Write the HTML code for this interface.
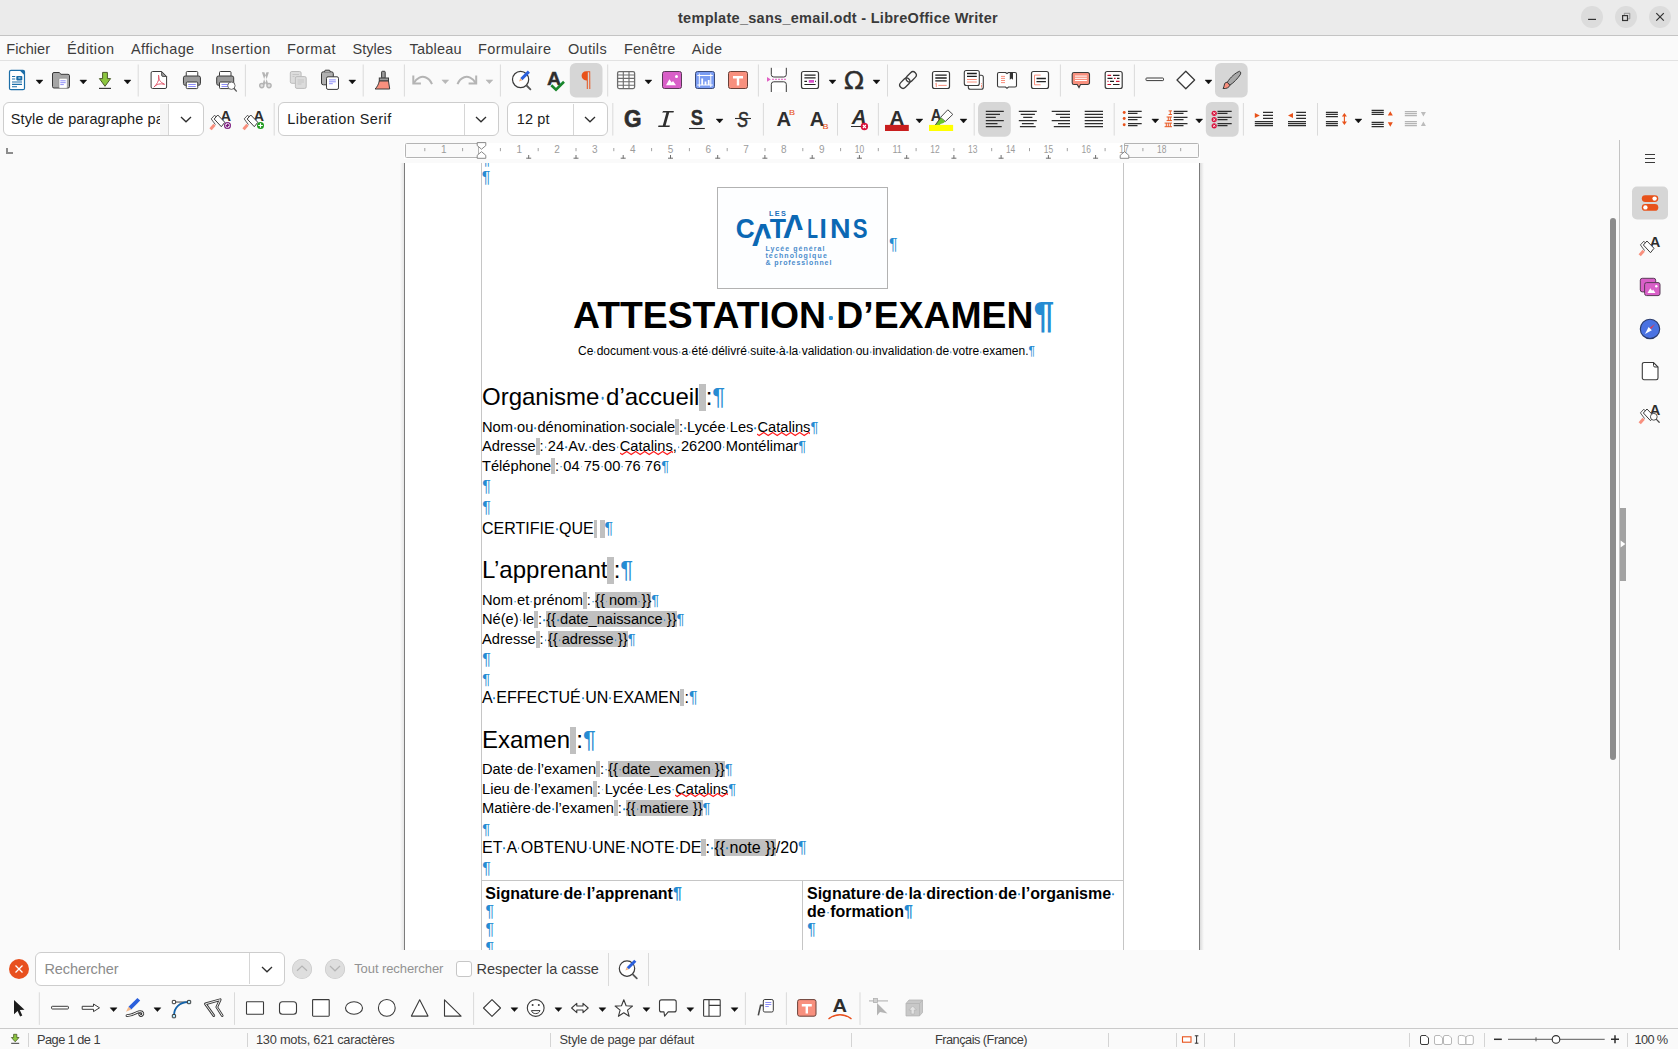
<!DOCTYPE html><html><head><meta charset="utf-8"><title>template_sans_email.odt - LibreOffice Writer</title><style>html,body{margin:0;padding:0}body{width:1678px;height:1049px;overflow:hidden;position:relative;background:#fafafa;font-family:'Liberation Sans',sans-serif}.d{position:absolute;white-space:pre;color:#000;font-family:'Liberation Sans',sans-serif;font-kerning:normal}
.s{position:relative}
.s::after{content:"";position:absolute;left:50%;top:57%;width:.11em;height:.11em;min-width:1.4px;min-height:1.4px;transform:translate(-50%,-50%);background:#268bd2;border-radius:30%}
.n{display:inline-block;width:.26em;background:#c0c0c0;line-height:1.12em}
.n::before{content:"\200b"}
.f{background:#c0c0c0}
.p{color:#268bd2}
.w{position:relative;display:inline-block;overflow:visible}
.wv{position:absolute;left:0;top:.94em;width:100%;height:5px;overflow:hidden}
</style></head><body>
<div style="position:absolute;left:0px;top:0px;width:1678px;height:35px;background:#ebebeb"></div>
<div style="position:absolute;left:0px;top:35px;width:1678px;height:1px;background:#c4c4c4"></div>
<div style="position:absolute;left:0px;top:60px;width:1678px;height:1px;background:#e2e2e2"></div>
<span style="position:absolute;left:678px;top:10.28px;white-space:pre;font:bold 14.5px/17px 'Liberation Sans',sans-serif;color:#3a3a3a;letter-spacing:0.283px;">template_sans_email.odt - LibreOffice Writer</span>
<div style="position:absolute;left:1581px;top:6px;width:22px;height:22px;border-radius:11px;background:#dcdcdc"></div>
<div style="position:absolute;left:1615px;top:6px;width:22px;height:22px;border-radius:11px;background:#dcdcdc"></div>
<div style="position:absolute;left:1649px;top:6px;width:22px;height:22px;border-radius:11px;background:#dcdcdc"></div>
<svg style="position:absolute;left:1580px;top:5px" width="92" height="24" viewBox="1580 5 92 24"><path d="M1588.100 19.400H1596" stroke="#333" stroke-width="1.200" fill="none"/><path d="M1624.300 14.900V13.300H1629.800V18.800H1628.200" stroke="#8a8a8a" stroke-width=".9" fill="none"/><rect x="1622.600" y="15.600" width="4.900" height="4.900" stroke="#333" stroke-width="1.200" fill="none"/><path d="M1656.300 13.100L1663.800 20.700M1663.800 13.100L1656.300 20.700" stroke="#333" stroke-width="1.200" fill="none"/></svg>
<span style="position:absolute;left:6.3px;top:40.98px;white-space:pre;font:normal 14.5px/17px 'Liberation Sans',sans-serif;color:#3d3d3d;letter-spacing:0.026px;">Fichier</span>
<span style="position:absolute;left:67px;top:40.98px;white-space:pre;font:normal 14.5px/17px 'Liberation Sans',sans-serif;color:#3d3d3d;letter-spacing:0.451px;">Édition</span>
<span style="position:absolute;left:131px;top:40.98px;white-space:pre;font:normal 14.5px/17px 'Liberation Sans',sans-serif;color:#3d3d3d;letter-spacing:0.366px;">Affichage</span>
<span style="position:absolute;left:211px;top:40.98px;white-space:pre;font:normal 14.5px/17px 'Liberation Sans',sans-serif;color:#3d3d3d;letter-spacing:0.453px;">Insertion</span>
<span style="position:absolute;left:287px;top:40.98px;white-space:pre;font:normal 14.5px/17px 'Liberation Sans',sans-serif;color:#3d3d3d;letter-spacing:0.513px;">Format</span>
<span style="position:absolute;left:352.5px;top:40.98px;white-space:pre;font:normal 14.5px/17px 'Liberation Sans',sans-serif;color:#3d3d3d;letter-spacing:0.000px;">Styles</span>
<span style="position:absolute;left:409.5px;top:40.98px;white-space:pre;font:normal 14.5px/17px 'Liberation Sans',sans-serif;color:#3d3d3d;letter-spacing:0.200px;">Tableau</span>
<span style="position:absolute;left:478px;top:40.98px;white-space:pre;font:normal 14.5px/17px 'Liberation Sans',sans-serif;color:#3d3d3d;letter-spacing:0.420px;">Formulaire</span>
<span style="position:absolute;left:568px;top:40.98px;white-space:pre;font:normal 14.5px/17px 'Liberation Sans',sans-serif;color:#3d3d3d;letter-spacing:0.320px;">Outils</span>
<span style="position:absolute;left:624px;top:40.98px;white-space:pre;font:normal 14.5px/17px 'Liberation Sans',sans-serif;color:#3d3d3d;letter-spacing:0.217px;">Fenêtre</span>
<span style="position:absolute;left:691.7px;top:40.98px;white-space:pre;font:normal 14.5px/17px 'Liberation Sans',sans-serif;color:#3d3d3d;letter-spacing:0.442px;">Aide</span>
<svg style="position:absolute;left:0;top:60px" width="1678" height="40" viewBox="0 60 1678 40"><path d="M11 70.3H23A1.5 1.5 0 0 1 24.5 71.8V88.2A1.5 1.5 0 0 1 23 89.7H11A1.5 1.5 0 0 1 9.5 88.2V71.8A1.5 1.5 0 0 1 11 70.3Z" fill="#fff" stroke="#1c6ea8" stroke-width="1.2"/><path d="M19.5 70.3H23A1.5 1.5 0 0 1 24.5 71.8V75.3Z" fill="#1c6ea8"/><rect x="16.3" y="76" width="6" height="4.4" rx=".8" fill="#1c6ea8"/><rect x="18.3" y="77.3" width="2.2" height="1.3" fill="#bcd7ea"/><path d="M12 76.5h3.2M12 79h3.2M12 82h10M12 84.4h10M12 86.8h5" stroke="#1c6ea8" stroke-width="1.1"/><path d="M36.10 80.10H42.90L39.5 83.90Z" fill="#111" stroke="#111" stroke-width=".5" stroke-linejoin="round"/><path d="M54 72.5h5.2l1.8 1.8h7a1.5 1.5 0 0 1 1.5 1.5V86.5a1.5 1.5 0 0 1-1.5 1.5H54a1.5 1.5 0 0 1-1.5-1.5V74a1.5 1.5 0 0 1 1.5-1.5Z" fill="#a6a6a6" stroke="#3a3a3a"/><rect x="59" y="78.3" width="8.3" height="10" rx="1" fill="#fff" stroke="#8a8a8a" stroke-width=".6"/><path d="M60.3 80.8h5.4M60.3 82.7h5.4M60.3 84.6h3.5" stroke="#8e8ef8" stroke-width="1"/><path d="M79.90 80.10H86.70L83.3 83.90Z" fill="#111" stroke="#111" stroke-width=".5" stroke-linejoin="round"/><path d="M102.6 72.4h4.8v6.2h3.2L105 86.3l-5.6-7.7h3.2Z" fill="#8cc63f" stroke="#4a5a2a" stroke-width="1" stroke-linejoin="round"/><path d="M99 88.4h12" stroke="#3a3a3a" stroke-width="1.2"/><path d="M124.10 80.10H130.90L127.5 83.90Z" fill="#111" stroke="#111" stroke-width=".5" stroke-linejoin="round"/><path d="M138.2 64.5V96.5" stroke="#dadada" stroke-width="1" fill="none"/><path d="M152.6 71.5h9l5 5v10.5a1.5 1.5 0 0 1-1.5 1.5h-12.5a1.5 1.5 0 0 1-1.5-1.5V73a1.5 1.5 0 0 1 1.5-1.5Z" fill="#fff" stroke="#3a3a3a"/><path d="M161.6 71.5v3.5a1.5 1.5 0 0 0 1.5 1.5h3.5Z" fill="#9a9a9a" stroke="#3a3a3a" stroke-width=".8" stroke-linejoin="round"/><path d="M158.6 75.6c1.2 2.5-.6 8-4.4 11.2M158.6 75.6c-.8 3 1.6 7 5.6 8.400M154.200 86.800c2-2.600 6.500-3.800 10-2.400" stroke="#e2566a" stroke-width="1" fill="none" stroke-linecap="round"/><rect x="186.25" y="71.5" width="11.5" height="5" rx="1" fill="#fff" stroke="#3a3a3a"/><rect x="183.45" y="76" width="17" height="9.3" rx="1.8" fill="#9c9c9c" stroke="#3a3a3a"/><rect x="186.25" y="82" width="11.5" height="6.6" rx="1" fill="#fff" stroke="#3a3a3a"/><path d="M188.25 84.5h7.5M188.25 86.5h7.5" stroke="#8e8ef8" stroke-width="1"/><rect x="219.5" y="71.5" width="11.5" height="5" rx="1" fill="#fff" stroke="#3a3a3a"/><rect x="216.7" y="76" width="17" height="9.3" rx="1.8" fill="#9c9c9c" stroke="#3a3a3a"/><rect x="219.5" y="82" width="11.5" height="6.6" rx="1" fill="#fff" stroke="#3a3a3a"/><path d="M221.5 84.5h7.5M221.5 86.5h7.5" stroke="#8e8ef8" stroke-width="1"/><circle cx="231.400" cy="85.700" r="3.700" fill="#fff" stroke="#5a5a5a" stroke-width=".9"/><path d="M234.100 88.500L236.400 91.100" stroke="#5a5a5a" stroke-width="1.400" stroke-linecap="round"/><path d="M245.4 64.5V96.5" stroke="#dadada" stroke-width="1" fill="none"/><path d="M261.900 72.200h2.500l3.700 11.200l-2.100 1.300ZM268.900 72.200h-2.500l-3.700 11.200l2.100 1.300Z" fill="#b4b4b4"/><circle cx="261.800" cy="85.600" r="2.100" fill="#e0e0e0" stroke="#b4b4b4" stroke-width="1.400"/><circle cx="269" cy="85.600" r="2.100" fill="#e0e0e0" stroke="#b4b4b4" stroke-width="1.400"/><rect x="290.300" y="71.500" width="10.800" height="11.800" rx="1.500" fill="#dcdcdc" stroke="#bcbcbc"/><rect x="295.400" y="76.600" width="10.800" height="11.800" rx="1.500" fill="#dcdcdc" stroke="#bcbcbc"/><path d="M292.500 74.500h6.500M292.500 76.500h2M297.500 80h6.500M297.500 82h6.500M297.500 84h4" stroke="#c6c6c6" stroke-width="1"/><rect x="321.500" y="71.800" width="11.800" height="13" rx="1.800" fill="#b0b0b0" stroke="#3a3a3a"/><path d="M324.700 72v-.8a1 1 0 0 1 1-1h3.400a1 1 0 0 1 1 1v.8" fill="#b0b0b0" stroke="#3a3a3a"/><rect x="326.500" y="76.800" width="12" height="12.600" rx="1.500" fill="#fff" stroke="#3a3a3a"/><path d="M329 79.900h6.800M329 81.800h6.800M329 83.700h3.800" stroke="#8e8ef8" stroke-width="1"/><path d="M348.90 80.10H355.70L352.3 83.90Z" fill="#111" stroke="#111" stroke-width=".5" stroke-linejoin="round"/><path d="M363.2 64.5V96.5" stroke="#dadada" stroke-width="1" fill="none"/><rect x="381.600" y="71.300" width="3.600" height="7" rx=".8" fill="#9c9c9c" stroke="#3a3a3a"/><rect x="379.300" y="78" width="9.200" height="3" fill="#9c9c9c" stroke="#3a3a3a"/><path d="M379.300 81h9.200c.4 2.700.8 5.300 1.200 8h-14.600c2.300-2.400 3.600-5 4.200-8Z" fill="#f8907e" stroke="#3a3a3a" stroke-linejoin="round"/><path d="M404.4 64.5V96.5" stroke="#dadada" stroke-width="1" fill="none"/><path d="M413.300 75.500v8h7.600" stroke="#b4b4b4" stroke-width="2" fill="none"/><path d="M413.800 83c3-5.500 8-7 11.500-5.800c3.200 1.100 5.400 3.600 6.700 7" stroke="#b4b4b4" stroke-width="2" fill="none"/><path d="M441.90 79.90H448.70L445.3 83.70Z" fill="#b8b8b8" stroke="#b8b8b8" stroke-width=".5" stroke-linejoin="round"/><path d="M476.200 75.500v8h-7.600" stroke="#b4b4b4" stroke-width="2" fill="none"/><path d="M475.700 83c-3-5.500-8-7-11.500-5.800c-3.200 1.100-5.400 3.600-6.700 7" stroke="#b4b4b4" stroke-width="2" fill="none"/><path d="M486.00 79.90H492.80L489.4 83.70Z" fill="#b8b8b8" stroke="#b8b8b8" stroke-width=".5" stroke-linejoin="round"/><path d="M500.4 64.5V96.5" stroke="#dadada" stroke-width="1" fill="none"/><circle cx="520.6" cy="79.5" r="8.1" fill="#fff" stroke="#3a3a3a" stroke-width="1.2"/><path d="M526.6 85.5L530.4 89.3" stroke="#555" stroke-width="1.8" stroke-linecap="round"/><path d="M521.4 79.1L528.9 71.6" stroke="#2a5fdc" stroke-width="3"/><path d="M519.0 81.5l1.300-3.300l2 2Z" fill="#f0b080"/><text transform="translate(547.01 84.50) scale(0.1953 0.1904)" font-family="Liberation Sans,sans-serif" font-size="100" font-weight="bold" font-style="normal" fill="#2e2e2e" stroke="#2e2e2e" stroke-width="2">A</text><path d="M551.300 85.200L556 89.600L564 81.700" stroke="#18852a" stroke-width="2.600" fill="none"/><rect x="569.800" y="63" width="32.700" height="34.600" rx="6" fill="#d6d6d6"/><path d="M590.200 71.200H586.200a4.600 4.600 0 0 0 0 9.200h.6V89h1V72.200h1.500V89h1Z" fill="#e8521a"/><path d="M607.7 64.5V96.5" stroke="#dadada" stroke-width="1" fill="none"/><rect x="617.600" y="71.600" width="17" height="17" rx="1.500" fill="#fff" stroke="#6c6c6c" stroke-width="1.300"/><path d="M623.300 71.600v17M629 71.600v17M617.600 75h17M617.600 78.400h17M617.600 81.800h17M617.600 85.200h17" stroke="#6c6c6c" stroke-width="1.100"/><path d="M645.00 80.10H651.80L648.4 83.90Z" fill="#111" stroke="#111" stroke-width=".5" stroke-linejoin="round"/><rect x="662.500" y="71.500" width="19" height="17" rx="2" fill="#d95fc8" stroke="#5a3a58"/><path d="M666 85.200l3.400-6l2.300 3.400l1.300-1.500l3 4.100Z" fill="#fff"/><circle cx="676.500" cy="76.400" r="1.500" fill="#fff"/><rect x="695.500" y="71.500" width="19" height="17" rx="2" fill="#7a9cf2" stroke="#3a4a78"/><path d="M699.300 73.500v13.500M710.800 73.500v13.500M697.300 75.500h15.500M697.300 85h15.500" stroke="#fff" stroke-width="1"/><path d="M701.300 85v-6.500h1.800V85M704.600 85v-3.500h1.800V85M707.800 85v-5h1.800V85" fill="#fff"/><rect x="728.500" y="71.500" width="19" height="17" rx="2" fill="#f8907e" stroke="#6a4038"/><path d="M733 76h10v2.400h-3.800v7.200h-2.400v-7.200H733Z" fill="#fff"/><path d="M758.4 64.5V96.5" stroke="#dadada" stroke-width="1" fill="none"/><path d="M771.300 67.800v6.700a2.500 2.500 0 0 0 2.500 2.500h10a2.500 2.500 0 0 0 2.500-2.500v-6.700M771.300 92v-7.700a2.500 2.500 0 0 1 2.500-2.500h10a2.500 2.500 0 0 1 2.500 2.500V92" fill="#fff" stroke="#3a3a3a" stroke-width="1"/><path d="M772 79.300h14.500" stroke="#e25fc4" stroke-width="1" stroke-dasharray="2 1"/><path d="M767 77v4.800l3.800-2.400Z" fill="#e25fc4"/><rect x="801.500" y="71.500" width="17" height="17" rx="2" fill="#fff" stroke="#3a3a3a" stroke-width="1.200"/><path d="M804.400 75.100h11.200M804.400 77.900h11.200M804.400 81.400h2.600M815 81.400h.8M804.400 84.500h11.200" stroke="#222" stroke-width="1.100"/><rect x="808.800" y="80" width="5.200" height="2.700" fill="#d650c8"/><path d="M829.10 80.10H835.90L832.5 83.90Z" fill="#111" stroke="#111" stroke-width=".5" stroke-linejoin="round"/><text transform="translate(844.10 88.70) scale(0.2616 0.2399)" font-family="DejaVu Sans,sans-serif" font-size="100" font-weight="normal" font-style="normal" fill="#2e2e2e" stroke="#2e2e2e" stroke-width="1.5">Ω</text><path d="M873.10 80.10H879.90L876.5 83.90Z" fill="#111" stroke="#111" stroke-width=".5" stroke-linejoin="round"/><path d="M887.5 64.5V96.5" stroke="#dadada" stroke-width="1" fill="none"/><g transform="rotate(-45 908 80)" fill="none" stroke="#3a3a3a" stroke-width="1.300"><rect x="897.700" y="76.700" width="11.600" height="6.600" rx="3.300"/><rect x="906.700" y="76.700" width="11.600" height="6.600" rx="3.300"/></g><rect x="932.500" y="71.500" width="17" height="17" rx="2" fill="#fff" stroke="#3a3a3a" stroke-width="1.200"/><path d="M935.300 75.200h11.400M935.300 78h11.400M935.300 80.800h11.400" stroke="#1c1c1c" stroke-width="1.300"/><path d="M935.300 84l1-.800v4M938.300 85.400h8.400" stroke="#f8907e" stroke-width="1" fill="none"/><rect x="968.300" y="75.300" width="15" height="14" rx="2" fill="#fff" stroke="#3a3a3a" stroke-width="1.100"/><rect x="964.300" y="70.500" width="15" height="15" rx="2" fill="#fff" stroke="#3a3a3a" stroke-width="1.100"/><path d="M967 73.500h9.800M967 76.400h9.800" stroke="#1c1c1c" stroke-width="1.300"/><path d="M967 79.500h9.800M967 82h9.800M981.500 83v.8M981.500 84.800v2.700" stroke="#f8907e" stroke-width="1"/><path d="M999 72.500h6.500l1.500 1l1.500-1h6.500a1.500 1.500 0 0 1 1.500 1.500v11.500a1.500 1.500 0 0 1-1.500 1.500h-6.500l-1.500 1.300l-1.500-1.300H999a1.500 1.500 0 0 1-1.500-1.500V74a1.500 1.500 0 0 1 1.500-1.500Z" fill="#fff" stroke="#3a3a3a" stroke-width="1.100"/><path d="M1001 76.400h4M1001 78.400h4M1001 80.500h4M1001 82.600h4" stroke="#f8907e" stroke-width="1"/><path d="M1009.800 72.500h3.200v7.200l-1.600-1.200l-1.600 1.200Z" fill="#333"/><rect x="1031.500" y="71.500" width="17" height="17" rx="2" fill="#fff" stroke="#3a3a3a" stroke-width="1.200"/><path d="M1040.600 75.100h-6.100v9.700h6.100" stroke="#f8907e" stroke-width="1" fill="none"/><path d="M1036.500 78.500h9.400M1036.500 81.600h9.400" stroke="#222" stroke-width="1.300"/><path d="M1060.4 64.5V96.5" stroke="#dadada" stroke-width="1" fill="none"/><path d="M1074 72.500h13.700a1.800 1.800 0 0 1 1.800 1.800v8.400a1.800 1.800 0 0 1-1.800 1.800h-7.200l-1.500 3l-1.800-3H1074a1.800 1.800 0 0 1-1.800-1.800v-8.400a1.800 1.800 0 0 1 1.800-1.800Z" fill="#f8907e" stroke="#3a3a3a" stroke-width="1.100"/><path d="M1075 76.100h11.900M1075 78.300h11.900M1075 80.500h11.900" stroke="#fff" stroke-width="1"/><rect x="1105.200" y="71.500" width="17" height="17" rx="2" fill="#fff" stroke="#3a3a3a" stroke-width="1.200"/><path d="M1113 75.300h6.500M1107.500 78.300h5M1117 78.300h2.500M1110 81.400h4M1113 84.500h6.500" stroke="#222" stroke-width="1.200"/><path d="M1107.500 75.300h3.600M1114 78.300h1.600M1107.500 81.400h1M1116 81.400h3.500M1107.500 84.500h3.600" stroke="#cc1030" stroke-width="1.200"/><path d="M1134.4 64.5V96.5" stroke="#dadada" stroke-width="1" fill="none"/><rect x="1146" y="78" width="17.500" height="2.600" rx=".7" fill="#fff" stroke="#3a3a3a" stroke-width="1"/><path d="M1185.800 71.200l8.800 8.800l-8.800 8.800l-8.800-8.800Z" fill="#fff" stroke="#3a3a3a" stroke-width="1.300" stroke-linejoin="round"/><path d="M1205.10 80.10H1211.90L1208.5 83.90Z" fill="#111" stroke="#111" stroke-width=".5" stroke-linejoin="round"/><rect x="1215" y="63" width="32.700" height="34.600" rx="6" fill="#d6d6d6"/><path d="M1227.300 82.300C1230 77.500 1236 72.300 1239.600 71.300c1.500.6 1.300 2.500.5 3.600c-2.300 3.400-6.500 8-10.300 10.300Z" fill="#a8a8a8" stroke="#3a3a3a" stroke-width="1"/><path d="M1227.300 82.300c-2-.2-2.800 1.200-3 2.700c-.2 1.400-.6 2.600-1.300 3.500c3 .4 6.300-.8 6.800-3.300Z" fill="#f8907e" stroke="#3a3a3a" stroke-width="1"/></svg>
<div style="position:absolute;left:2.5px;top:102.4px;width:199.0px;height:31.2px;border:1px solid #cdcdcd;border-radius:6px;background:#fff"></div>
<div style="position:absolute;left:168px;top:103.5px;width:1px;height:31px;background:#d6d6d6"></div>
<svg style="position:absolute;left:179.8px;top:115.9px;" width="12" height="7" viewBox="0 0 12 7"><path d="M1 1L6 5.800L11 1" stroke="#2e2e2e" stroke-width="1.300" fill="none"/></svg>
<div style="position:absolute;left:160px;top:103.5px;width:8px;height:31px;background:#f6f6f6"></div>
<div style="position:absolute;left:10.8px;top:104px;width:149.5px;height:30px;overflow:hidden">
<span style="position:absolute;left:0px;top:6.78px;white-space:pre;font:normal 14.5px/17px 'Liberation Sans',sans-serif;color:#1c1c1c;letter-spacing:0.103px;">Style de paragraphe par défaut</span>
</div>
<div style="position:absolute;left:278.3px;top:102.4px;width:218.7px;height:31.2px;border:1px solid #cdcdcd;border-radius:6px;background:#fff"></div>
<div style="position:absolute;left:463.6px;top:103.5px;width:1px;height:31px;background:#d6d6d6"></div>
<svg style="position:absolute;left:474.7px;top:115.9px;" width="12" height="7" viewBox="0 0 12 7"><path d="M1 1L6 5.800L11 1" stroke="#2e2e2e" stroke-width="1.300" fill="none"/></svg>
<span style="position:absolute;left:287.3px;top:110.98px;white-space:pre;font:normal 14.5px/17px 'Liberation Sans',sans-serif;color:#1c1c1c;letter-spacing:0.423px;">Liberation Serif</span>
<div style="position:absolute;left:507.4px;top:102.4px;width:98.30000000000007px;height:31.2px;border:1px solid #cdcdcd;border-radius:6px;background:#fff"></div>
<div style="position:absolute;left:572.5px;top:103.5px;width:1px;height:31px;background:#d6d6d6"></div>
<svg style="position:absolute;left:583.8px;top:115.9px;" width="12" height="7" viewBox="0 0 12 7"><path d="M1 1L6 5.800L11 1" stroke="#2e2e2e" stroke-width="1.300" fill="none"/></svg>
<span style="position:absolute;left:516.8px;top:110.98px;white-space:pre;font:normal 14.5px/17px 'Liberation Sans',sans-serif;color:#1c1c1c;letter-spacing:0.090px;">12 pt</span>
<svg style="position:absolute;left:0;top:100px" width="1678" height="40" viewBox="0 100 1678 40"><text transform="translate(220.54 120.70) scale(0.1461 0.1555)" font-family="Liberation Sans,sans-serif" font-size="100" font-weight="bold" font-style="normal" fill="#2e2e2e" >A</text><path d="M210.50 129.20L214.50 124.70" stroke="#f8907e" stroke-width="3" stroke-linecap="butt"/><path d="M215.40 124.60L211.20 118.90L214.60 115.20L216.20 117.00" stroke="#4a4a4a" stroke-width=".9" fill="none" stroke-linejoin="round"/><path d="M217.75 115.00L224.80 122.30L221.30 126.70L214.20 119.00Z" fill="#fff" stroke="#3a3a3a" stroke-width="1" stroke-linejoin="round"/><circle cx="227.5" cy="125.5" r="3.500" fill="#7a1a7e"/><circle cx="227.5" cy="125.5" r="2.100" fill="none" stroke="#fff" stroke-width=".8"/><path d="M226.0 124.0l3 3" stroke="#fff" stroke-width=".8"/><circle cx="227.5" cy="125.5" r=".9" fill="#7a1a7e"/><text transform="translate(253.54 120.70) scale(0.1461 0.1555)" font-family="Liberation Sans,sans-serif" font-size="100" font-weight="bold" font-style="normal" fill="#2e2e2e" >A</text><path d="M243.50 129.20L247.50 124.70" stroke="#f8907e" stroke-width="3" stroke-linecap="butt"/><path d="M248.40 124.60L244.20 118.90L247.60 115.20L249.20 117.00" stroke="#4a4a4a" stroke-width=".9" fill="none" stroke-linejoin="round"/><path d="M250.75 115.00L257.80 122.30L254.30 126.70L247.20 119.00Z" fill="#fff" stroke="#3a3a3a" stroke-width="1" stroke-linejoin="round"/><circle cx="260.5" cy="125.5" r="3.500" fill="#1e9a1e"/><path d="M258.2 125.5h4.600M260.5 123.2v4.600" stroke="#fff" stroke-width="1.200"/><path d="M274.2 103V135.6" stroke="#dadada" stroke-width="1" fill="none"/><path d="M612.8 103V135.6" stroke="#dadada" stroke-width="1" fill="none"/><text transform="translate(623.98 126.96) scale(0.2253 0.2415)" font-family="Liberation Sans,sans-serif" font-size="100" font-weight="bold" font-style="normal" fill="#2e2e2e" stroke="#2e2e2e" stroke-width="3">G</text><path d="M663.200 111h10.700l-.4 1.600h-4.300l-3.600 12.800h4.300l-.4 1.600H658.100l.4-1.600h4.300l3.600-12.800h-4.300Z" fill="#2e2e2e"/><text transform="translate(690.87 125.39) scale(0.1836 0.2189)" font-family="Liberation Sans,sans-serif" font-size="100" font-weight="bold" font-style="normal" fill="#2e2e2e" stroke="#2e2e2e" stroke-width="1.5">S</text><path d="M689 128.500h15.800" stroke="#2e2e2e" stroke-width="1.100"/><path d="M716.20 119.10H723.00L719.6 122.90Z" fill="#111" stroke="#111" stroke-width=".5" stroke-linejoin="round"/><text transform="translate(737.24 126.78) scale(0.1624 0.2246)" font-family="Liberation Sans,sans-serif" font-size="100" font-weight="normal" font-style="italic" fill="#2e2e2e" stroke="#2e2e2e" stroke-width="2.5">S</text><path d="M735 118.500h16" stroke="#2e2e2e" stroke-width="1.100"/><path d="M763.4 103V135.6" stroke="#dadada" stroke-width="1" fill="none"/><text transform="translate(776.50 125.60) scale(0.2027 0.1977)" font-family="Liberation Sans,sans-serif" font-size="100" font-weight="bold" font-style="normal" fill="#2e2e2e" >A</text><text transform="translate(789.06 114.80) scale(0.0902 0.0785)" font-family="Liberation Sans,sans-serif" font-size="100" font-weight="normal" font-style="normal" fill="#e8521a" stroke="#e8521a" stroke-width="1">B</text><text transform="translate(809.80 125.60) scale(0.2012 0.1977)" font-family="Liberation Sans,sans-serif" font-size="100" font-weight="bold" font-style="normal" fill="#2e2e2e" >A</text><text transform="translate(822.46 129.00) scale(0.0902 0.0799)" font-family="Liberation Sans,sans-serif" font-size="100" font-weight="normal" font-style="normal" fill="#e8521a" stroke="#e8521a" stroke-width="1">B</text><path d="M837.5 103V135.6" stroke="#dadada" stroke-width="1" fill="none"/><text transform="translate(851.72 123.80) scale(0.2044 0.2006)" font-family="Liberation Sans,sans-serif" font-size="100" font-weight="bold" font-style="italic" fill="#2e2e2e" >A</text><path d="M851 126.500h10.500" stroke="#2e2e2e" stroke-width="1"/><circle cx="864.400" cy="126.500" r="3.700" fill="#d8123c"/><path d="M862.900 125l3 3M865.900 125l-3 3" stroke="#fff" stroke-width="1.100"/><path d="M878.4 103V135.6" stroke="#dadada" stroke-width="1" fill="none"/><text transform="translate(889.49 125.00) scale(0.2057 0.2035)" font-family="Liberation Sans,sans-serif" font-size="100" font-weight="bold" font-style="normal" fill="#2e2e2e" >A</text><rect x="885" y="124.900" width="23.800" height="6.100" fill="#c81e1e"/><path d="M916.00 119.10H922.80L919.4 122.90Z" fill="#111" stroke="#111" stroke-width=".5" stroke-linejoin="round"/><text transform="translate(930.63 120.80) scale(0.1491 0.1570)" font-family="Liberation Sans,sans-serif" font-size="100" font-weight="bold" font-style="normal" fill="#2e2e2e" >A</text><path d="M947.800 109.800L952.800 114.400L945.300 121.500L940.500 117.400Z" fill="#fff" stroke="#4a4a4a" stroke-width="1" stroke-linejoin="round"/><path d="M940.500 117.400L945.300 121.500L943.500 122.900L940.500 124.100L939.900 125H935.300Z" fill="#6cc42c"/><path d="M935.300 125L940.500 117.900" stroke="#3a3a3a" stroke-width=".9"/><rect x="929" y="124.900" width="24.100" height="6.100" fill="#ffff00"/><path d="M960.10 119.10H966.90L963.5 122.90Z" fill="#111" stroke="#111" stroke-width=".5" stroke-linejoin="round"/><path d="M974.2 103V135.6" stroke="#dadada" stroke-width="1" fill="none"/><rect x="978" y="102" width="32.800" height="34.700" rx="6" fill="#d6d6d6"/><path d="M985.8 111.3H1003.8M985.8 114.4H1000.0M985.8 117.4H995.8M985.8 120.5H1003.8M985.8 123.5H997.5M985.8 126.5H1001.7" stroke="#2e2e2e" stroke-width="1.25" fill="none"/><path d="M1018.8 111.3H1036.8M1020.7 114.4H1034.9M1023.2 117.4H1032.4M1018.8 120.5H1036.8M1021.9 123.5H1033.7M1019.9 126.5H1035.7" stroke="#2e2e2e" stroke-width="1.25" fill="none"/><path d="M1051.7 111.3H1070.0M1055.8 114.4H1070.0M1060.0 117.4H1070.0M1051.7 120.5H1070.0M1058.0 123.5H1070.0M1053.8 126.5H1070.0" stroke="#2e2e2e" stroke-width="1.25" fill="none"/><path d="M1084.7 111.3H1103.0M1084.7 114.4H1103.0M1084.7 117.4H1103.0M1084.7 120.5H1103.0M1084.7 123.5H1103.0M1084.7 126.5H1103.0" stroke="#2e2e2e" stroke-width="1.25" fill="none"/><path d="M1114.2 103V135.6" stroke="#dadada" stroke-width="1" fill="none"/><path d="M1128.0 111.3H1141.7M1128.0 113.4H1137.5M1128.0 117.4H1141.7M1128.0 119.5H1137.5M1128.0 123.5H1141.7M1128.0 125.6H1137.5" stroke="#2e2e2e" stroke-width="1.25" fill="none"/><circle cx="1124.200" cy="112.5" r="1.450" fill="#e8521a"/><circle cx="1124.200" cy="118.5" r="1.450" fill="#e8521a"/><circle cx="1124.200" cy="124.7" r="1.450" fill="#e8521a"/><path d="M1151.90 119.10H1158.70L1155.3 122.90Z" fill="#111" stroke="#111" stroke-width=".5" stroke-linejoin="round"/><path d="M1173.7 111.3H1187.5M1173.7 113.4H1183.5M1173.7 117.4H1187.5M1173.7 119.5H1183.5M1173.7 123.5H1187.5M1173.7 125.6H1183.5" stroke="#2e2e2e" stroke-width="1.25" fill="none"/><path d="M1168.6 110.9H1172M1168.6 114.5H1172M1170.3 110.9V114.5" stroke="#e8521a" stroke-width=".95" fill="none"/><path d="M1166.6 117.0H1172M1166.6 120.6H1172M1168.3 117.0V120.6M1170.3 117.0V120.6" stroke="#e8521a" stroke-width=".95" fill="none"/><path d="M1164.6 123.10000000000001H1172M1164.6 126.7H1172M1166.3 123.10000000000001V126.7M1168.3 123.10000000000001V126.7M1170.3 123.10000000000001V126.7" stroke="#e8521a" stroke-width=".95" fill="none"/><path d="M1195.80 119.10H1202.60L1199.2 122.90Z" fill="#111" stroke="#111" stroke-width=".5" stroke-linejoin="round"/><rect x="1205.800" y="102" width="32.900" height="34.700" rx="6" fill="#d6d6d6"/><path d="M1217.5 111.3H1231.7M1217.5 113.4H1227.5M1217.5 117.4H1231.7M1217.5 119.5H1227.5M1217.5 123.5H1231.7M1217.5 125.6H1227.5" stroke="#2e2e2e" stroke-width="1.25" fill="none"/><circle cx="1214.200" cy="113.3" r="2.600" fill="#d8123c"/><path d="M1213.100 112.2l2.200 2.200M1215.300 112.2l-2.200 2.200" stroke="#fff" stroke-width=".8"/><circle cx="1214.200" cy="119.6" r="2.600" fill="#d8123c"/><path d="M1213.100 118.5l2.200 2.200M1215.300 118.5l-2.200 2.200" stroke="#fff" stroke-width=".8"/><circle cx="1214.200" cy="125.8" r="2.600" fill="#d8123c"/><path d="M1213.100 124.7l2.200 2.200M1215.300 124.7l-2.200 2.200" stroke="#fff" stroke-width=".8"/><path d="M1243.4 103V135.6" stroke="#dadada" stroke-width="1" fill="none"/><path d="M1263.0 112.3H1273.0M1263.0 115.3H1273.0M1263.0 118.4H1273.0M1254.8 121.5H1273.0M1254.8 123.6H1273.0M1254.8 125.7H1273.0" stroke="#2e2e2e" stroke-width="1.25" fill="none"/><path d="M1254.800 113v5l5-2.500Z" fill="#e8521a"/><path d="M1296.2 112.3H1306.0M1296.2 115.3H1306.0M1296.2 118.4H1306.0M1288.0 121.5H1306.0M1288.0 123.6H1306.0M1288.0 125.7H1306.0" stroke="#2e2e2e" stroke-width="1.25" fill="none"/><path d="M1293 113v5l-5-2.500Z" fill="#e8521a"/><path d="M1317.5 103V135.6" stroke="#dadada" stroke-width="1" fill="none"/><path d="M1325.9 112.3H1337.9M1325.9 114.4H1337.9M1325.9 116.5H1337.9M1325.9 121.5H1337.9M1325.9 123.6H1337.9M1325.9 125.7H1337.9" stroke="#2e2e2e" stroke-width="1.25" fill="none"/><path d="M1344.400 115v8" stroke="#e8521a" stroke-width="1.100"/><path d="M1341.900 116.600l2.500-3.600l2.500 3.600ZM1341.900 121.400l2.500 3.600l2.500-3.600Z" fill="#e8521a"/><path d="M1355.00 119.10H1361.80L1358.4 122.90Z" fill="#111" stroke="#111" stroke-width=".5" stroke-linejoin="round"/><path d="M1371.6 110.3H1383.8M1371.6 112.3H1383.8M1371.6 114.4H1383.8M1371.6 122.3H1383.8M1371.6 124.4H1383.8M1371.6 126.5H1383.8" stroke="#2e2e2e" stroke-width="1.25" fill="none"/><path d="M1387.800 115.600h5l-2.500-4.400ZM1387.800 122.300h5l-2.500 4.400Z" fill="#e8521a"/><path d="M1404.8 111.5H1416.9M1404.8 113.5H1416.9M1404.8 115.6H1416.9M1404.8 121.5H1416.9M1404.8 123.5H1416.9M1404.8 125.6H1416.9" stroke="#b4b4b4" stroke-width="1.25" fill="none"/><path d="M1420.900 112h5l-2.500 4.500ZM1420.900 126h5l-2.500-4.500Z" fill="#bcbcbc"/></svg>
<div style="position:absolute;left:404px;top:142.5px;width:796px;height:16px;background:#fff"></div>
<div style="position:absolute;left:405px;top:143px;width:72px;height:13px;border:1px solid #b4b4b4;background:#fafafa;border-radius:1.5px 0 0 1.5px"></div>
<div style="position:absolute;left:1124px;top:143px;width:73px;height:13px;border:1px solid #b4b4b4;background:#fafafa;border-radius:0 1.5px 1.5px 0"></div>
<svg style="position:absolute;left:0;top:140px" width="1678" height="22" viewBox="0 140 1678 22"><text x="443.7" y="153" text-anchor="middle" font-family="Liberation Sans,sans-serif" font-size="10" fill="#9c9c9c">1</text><path d="M462.6 148v3.200" stroke="#8a8a8a" stroke-width=".8"/><path d="M500.4 148v3.200" stroke="#8a8a8a" stroke-width=".8"/><text x="519.3" y="153" text-anchor="middle" font-family="Liberation Sans,sans-serif" font-size="10" fill="#9c9c9c">1</text><path d="M538.2 148v3.200" stroke="#8a8a8a" stroke-width=".8"/><text x="557.1" y="153" text-anchor="middle" font-family="Liberation Sans,sans-serif" font-size="10" fill="#9c9c9c">2</text><path d="M576.0 148v3.200" stroke="#8a8a8a" stroke-width=".8"/><text x="594.9" y="153" text-anchor="middle" font-family="Liberation Sans,sans-serif" font-size="10" fill="#9c9c9c">3</text><path d="M613.8 148v3.200" stroke="#8a8a8a" stroke-width=".8"/><text x="632.7" y="153" text-anchor="middle" font-family="Liberation Sans,sans-serif" font-size="10" fill="#9c9c9c">4</text><path d="M651.6 148v3.200" stroke="#8a8a8a" stroke-width=".8"/><text x="670.5" y="153" text-anchor="middle" font-family="Liberation Sans,sans-serif" font-size="10" fill="#9c9c9c">5</text><path d="M689.4 148v3.200" stroke="#8a8a8a" stroke-width=".8"/><text x="708.3" y="153" text-anchor="middle" font-family="Liberation Sans,sans-serif" font-size="10" fill="#9c9c9c">6</text><path d="M727.2 148v3.200" stroke="#8a8a8a" stroke-width=".8"/><text x="746.1" y="153" text-anchor="middle" font-family="Liberation Sans,sans-serif" font-size="10" fill="#9c9c9c">7</text><path d="M765.0 148v3.200" stroke="#8a8a8a" stroke-width=".8"/><text x="783.9" y="153" text-anchor="middle" font-family="Liberation Sans,sans-serif" font-size="10" fill="#9c9c9c">8</text><path d="M802.8 148v3.200" stroke="#8a8a8a" stroke-width=".8"/><text x="821.7" y="153" text-anchor="middle" font-family="Liberation Sans,sans-serif" font-size="10" fill="#9c9c9c">9</text><path d="M840.6 148v3.200" stroke="#8a8a8a" stroke-width=".8"/><text x="859.5" y="153" text-anchor="middle" font-family="Liberation Sans,sans-serif" font-size="10" fill="#9c9c9c" textLength="9.400" lengthAdjust="spacingAndGlyphs">10</text><path d="M878.3 148v3.200" stroke="#8a8a8a" stroke-width=".8"/><text x="897.2" y="153" text-anchor="middle" font-family="Liberation Sans,sans-serif" font-size="10" fill="#9c9c9c" textLength="9.400" lengthAdjust="spacingAndGlyphs">11</text><path d="M916.1 148v3.200" stroke="#8a8a8a" stroke-width=".8"/><text x="935.0" y="153" text-anchor="middle" font-family="Liberation Sans,sans-serif" font-size="10" fill="#9c9c9c" textLength="9.400" lengthAdjust="spacingAndGlyphs">12</text><path d="M953.9 148v3.200" stroke="#8a8a8a" stroke-width=".8"/><text x="972.8" y="153" text-anchor="middle" font-family="Liberation Sans,sans-serif" font-size="10" fill="#9c9c9c" textLength="9.400" lengthAdjust="spacingAndGlyphs">13</text><path d="M991.7 148v3.200" stroke="#8a8a8a" stroke-width=".8"/><text x="1010.6" y="153" text-anchor="middle" font-family="Liberation Sans,sans-serif" font-size="10" fill="#9c9c9c" textLength="9.400" lengthAdjust="spacingAndGlyphs">14</text><path d="M1029.5 148v3.200" stroke="#8a8a8a" stroke-width=".8"/><text x="1048.4" y="153" text-anchor="middle" font-family="Liberation Sans,sans-serif" font-size="10" fill="#9c9c9c" textLength="9.400" lengthAdjust="spacingAndGlyphs">15</text><path d="M1067.3 148v3.200" stroke="#8a8a8a" stroke-width=".8"/><text x="1086.2" y="153" text-anchor="middle" font-family="Liberation Sans,sans-serif" font-size="10" fill="#9c9c9c" textLength="9.400" lengthAdjust="spacingAndGlyphs">16</text><path d="M1105.1 148v3.200" stroke="#8a8a8a" stroke-width=".8"/><text x="1124.0" y="153" text-anchor="middle" font-family="Liberation Sans,sans-serif" font-size="10" fill="#9c9c9c" textLength="9.400" lengthAdjust="spacingAndGlyphs">17</text><path d="M1142.9 148v3.200" stroke="#8a8a8a" stroke-width=".8"/><text x="1161.8" y="153" text-anchor="middle" font-family="Liberation Sans,sans-serif" font-size="10" fill="#9c9c9c" textLength="9.400" lengthAdjust="spacingAndGlyphs">18</text><path d="M1180.7 148v3.200" stroke="#8a8a8a" stroke-width=".8"/><path d="M424.8 148v3.200" stroke="#8a8a8a" stroke-width=".8"/><path d="M528.7 155v3.400M526.2 158.200h5" stroke="#5e5e5e" stroke-width=".9" fill="none"/><path d="M576.0 155v3.400M573.5 158.200h5" stroke="#5e5e5e" stroke-width=".9" fill="none"/><path d="M623.2 155v3.400M620.7 158.200h5" stroke="#5e5e5e" stroke-width=".9" fill="none"/><path d="M670.5 155v3.400M668.0 158.200h5" stroke="#5e5e5e" stroke-width=".9" fill="none"/><path d="M717.7 155v3.400M715.2 158.200h5" stroke="#5e5e5e" stroke-width=".9" fill="none"/><path d="M764.9 155v3.400M762.4 158.200h5" stroke="#5e5e5e" stroke-width=".9" fill="none"/><path d="M812.2 155v3.400M809.7 158.200h5" stroke="#5e5e5e" stroke-width=".9" fill="none"/><path d="M859.4 155v3.400M856.9 158.200h5" stroke="#5e5e5e" stroke-width=".9" fill="none"/><path d="M906.7 155v3.400M904.2 158.200h5" stroke="#5e5e5e" stroke-width=".9" fill="none"/><path d="M953.9 155v3.400M951.4 158.200h5" stroke="#5e5e5e" stroke-width=".9" fill="none"/><path d="M1001.1 155v3.400M998.6 158.200h5" stroke="#5e5e5e" stroke-width=".9" fill="none"/><path d="M1048.4 155v3.400M1045.9 158.200h5" stroke="#5e5e5e" stroke-width=".9" fill="none"/><path d="M1095.6 155v3.400M1093.1 158.200h5" stroke="#5e5e5e" stroke-width=".9" fill="none"/><path d="M477.200 142.600h8.600v3l-4.300 3.600l-4.300-3.600ZM477.200 158.300h8.600v-3l-4.300-3.600l-4.300 3.600Z" fill="#fff" stroke="#7c7c7c" stroke-width=".9"/><path d="M1120.200 158.300h8.600v-3l-4.300-3.600l-4.300 3.600Z" fill="#fff" stroke="#7c7c7c" stroke-width=".9"/></svg>
<div style="position:absolute;left:6px;top:148px;width:2px;height:5.7px;background:#8c8c8c"></div>
<div style="position:absolute;left:6px;top:151.8px;width:7px;height:1.9px;background:#8c8c8c"></div>
<div style="position:absolute;left:400px;top:163px;width:5px;height:787px;background:linear-gradient(90deg,rgba(0,0,0,0),rgba(0,0,0,.10))"></div>
<div style="position:absolute;left:1200px;top:163px;width:4px;height:787px;background:linear-gradient(90deg,rgba(0,0,0,.12),rgba(0,0,0,0))"></div>
<div style="position:absolute;left:404px;top:163px;width:796px;height:787px;background:#fff;border-left:1px solid #7c7c7c;border-right:1px solid #7c7c7c;box-sizing:border-box"></div>
<div style="position:absolute;left:481px;top:163px;width:1px;height:787px;background:#c6c6c6"></div>
<div style="position:absolute;left:1123px;top:163px;width:1px;height:787px;background:#c6c6c6"></div>
<div style="position:absolute;left:404px;top:163px;width:796px;height:787px;overflow:hidden">
<div class="d" style="left:77.80000000000001px;top:-13.44px;font:normal 16px/19px 'Liberation Sans',sans-serif;"><span class="p">¶</span></div>
<div class="d" style="left:77.80000000000001px;top:4.96px;font:normal 16px/19px 'Liberation Sans',sans-serif;"><span class="p">¶</span></div>
<div style="position:absolute;left:313px;top:24px;width:168.800px;height:100.200px;border:1px solid #b2b2b2;background:#fdfeff"></div>
<svg style="position:absolute;left:314px;top:25px" width="169" height="101" viewBox="718 188 169 101"><text x="769" y="215.800" font-family="Liberation Sans,sans-serif" font-weight="bold" font-size="7.300" letter-spacing="1.300" fill="#1a70bc">LES</text><text transform="translate(735.72 238.44) scale(0.2631 0.2684)" font-family="Liberation Sans,sans-serif" font-size="100" font-weight="bold" font-style="normal" fill="#0b68b4" >C</text><clipPath id="ca1"><path d="M751.264 223H763V247H751.264ZM763 223H774.736V238.4H763Z"/></clipPath><g clip-path="url(#ca1)"><text transform="translate(751.47 246.00) scale(0.3200 0.3198)" font-family="Liberation Sans,sans-serif" font-size="100" font-weight="bold" font-style="normal" fill="#0b68b4" >A</text></g><polygon points="760.22,235.85 765.83,235.85 766.16,236.85 767.44,241.00 758.61,241.00 759.89,236.85" fill="#fdfeff"/><text transform="translate(769.70 238.40) scale(0.2666 0.2674)" font-family="Liberation Sans,sans-serif" font-size="100" font-weight="bold" font-style="normal" fill="#0b68b4" >T</text><clipPath id="ca2"><path d="M782.5712 214.8H794.6V239.4H782.5712ZM794.6 214.8H806.6288000000001V230H794.6Z"/></clipPath><g clip-path="url(#ca2)"><text transform="translate(782.75 238.40) scale(0.3288 0.3285)" font-family="Liberation Sans,sans-serif" font-size="100" font-weight="bold" font-style="normal" fill="#0b68b4" >A</text></g><polygon points="791.74,227.97 797.51,227.97 797.84,229.00 799.16,233.27 790.09,233.27 791.41,229.00" fill="#fdfeff"/><text transform="translate(807.13 238.40) scale(0.1754 0.2674)" font-family="Liberation Sans,sans-serif" font-size="100" font-weight="bold" font-style="normal" fill="#0b68b4" >L</text><text transform="translate(819.44 238.40) scale(0.2638 0.2674)" font-family="Liberation Sans,sans-serif" font-size="100" font-weight="bold" font-style="normal" fill="#0b68b4" >I</text><text transform="translate(830.09 238.40) scale(0.2858 0.2674)" font-family="Liberation Sans,sans-serif" font-size="100" font-weight="bold" font-style="normal" fill="#0b68b4" >N</text><text transform="translate(852.76 238.44) scale(0.2220 0.2684)" font-family="Liberation Sans,sans-serif" font-size="100" font-weight="bold" font-style="normal" fill="#0b68b4" >S</text><text x="765.400" y="250.6" font-family="Liberation Sans,sans-serif" font-weight="bold" font-size="7" fill="#4a8ccc" textLength="59" lengthAdjust="spacing">Lycée général</text><text x="765.400" y="257.7" font-family="Liberation Sans,sans-serif" font-weight="bold" font-size="7" fill="#4a8ccc" textLength="61.4" lengthAdjust="spacing">technologique</text><text x="765.400" y="264.9" font-family="Liberation Sans,sans-serif" font-weight="bold" font-size="7" fill="#4a8ccc" textLength="66" lengthAdjust="spacing">&amp; professionnel</text></svg>
<div class="d" style="left:485px;top:71.96px;font:normal 16px/19px 'Liberation Sans',sans-serif;"><span class="p">¶</span></div>
<div class="d" style="left:169px;top:130.07px;font:bold 37.33px/45px 'Liberation Sans',sans-serif;">ATTESTATION<span class="s"> </span>D’EXAMEN<span class="p">¶</span></div>
<div class="d" style="left:174px;top:181.24px;font:normal 12px/14px 'Liberation Sans',sans-serif;">Ce<span class="s"> </span>document<span class="s"> </span>vous<span class="s"> </span>a<span class="s"> </span>été<span class="s"> </span>délivré<span class="s"> </span>suite<span class="s"> </span>à<span class="s"> </span>la<span class="s"> </span>validation<span class="s"> </span>ou<span class="s"> </span>invalidation<span class="s"> </span>de<span class="s"> </span>votre<span class="s"> </span>examen.<span class="p">¶</span></div>
<div class="d" style="left:78px;top:218.68px;font:normal 24px/29px 'Liberation Sans',sans-serif;">Organisme<span class="s"> </span>d’accueil<span class="n"></span>:<span class="p">¶</span></div>
<div class="d" style="left:78px;top:254.92px;font:normal 14.67px/18px 'Liberation Sans',sans-serif;">Nom<span class="s"> </span>ou<span class="s"> </span>dénomination<span class="s"> </span>sociale<span class="n"></span>:<span class="s"> </span>Lycée<span class="s"> </span>Les<span class="s"> </span><span class="w"><svg class="wv" width="90" height="5"><path d="M-2.3 0.6L2.2 3.6L6.7 0.6L11.2 3.6L15.7 0.6L20.2 3.6L24.7 0.6L29.2 3.6L33.7 0.6L38.2 3.6L42.7 0.6L47.2 3.6L51.7 0.6L56.2 3.6L60.7 0.6L65.2 3.6L69.7 0.6L74.2 3.6L78.7 0.6L83.2 3.6L87.7 0.6" fill="none" stroke="#ff1a1a" stroke-width="1.200" stroke-linejoin="round"/></svg>Catalins</span><span class="p">¶</span></div>
<div class="d" style="left:78px;top:274.22px;font:normal 14.67px/18px 'Liberation Sans',sans-serif;">Adresse<span class="n"></span>:<span class="s"> </span>24<span class="s"> </span>Av.<span class="s"> </span>des<span class="s"> </span><span class="w"><svg class="wv" width="90" height="5"><path d="M-2.3 0.6L2.2 3.6L6.7 0.6L11.2 3.6L15.7 0.6L20.2 3.6L24.7 0.6L29.2 3.6L33.7 0.6L38.2 3.6L42.7 0.6L47.2 3.6L51.7 0.6L56.2 3.6L60.7 0.6L65.2 3.6L69.7 0.6L74.2 3.6L78.7 0.6L83.2 3.6L87.7 0.6" fill="none" stroke="#ff1a1a" stroke-width="1.200" stroke-linejoin="round"/></svg>Catalins</span>,<span class="s"> </span>26200<span class="s"> </span>Montélimar<span class="p">¶</span></div>
<div class="d" style="left:78px;top:293.72px;font:normal 14.67px/18px 'Liberation Sans',sans-serif;">Téléphone<span class="n"></span>:<span class="s"> </span>04<span class="s"> </span>75<span class="s"> </span>00<span class="s"> </span>76<span class="s"> </span>76<span class="p">¶</span></div>
<div class="d" style="left:78.30000000000001px;top:313.96px;font:normal 16px/19px 'Liberation Sans',sans-serif;"><span class="p">¶</span></div>
<div class="d" style="left:78.30000000000001px;top:334.96px;font:normal 16px/19px 'Liberation Sans',sans-serif;"><span class="p">¶</span></div>
<div class="d" style="left:78px;top:355.76px;font:normal 16px/19px 'Liberation Sans',sans-serif;">CERTIFIE<span class="s"> </span>QUE<span class="n" style="width:3.300px;margin-right:2.500px"></span><span class="n" style="width:5px"></span><span class="p">¶</span></div>
<div class="d" style="left:78px;top:392.18px;font:normal 24px/29px 'Liberation Sans',sans-serif;">L’apprenant<span class="n"></span>:<span class="p">¶</span></div>
<div class="d" style="left:78px;top:428.42px;font:normal 14.67px/18px 'Liberation Sans',sans-serif;">Nom<span class="s"> </span>et<span class="s"> </span>prénom<span class="n"></span>:<span class="s"> </span><span class="f">{{<span class="s"> </span>nom<span class="s"> </span>}}</span><span class="p">¶</span></div>
<div class="d" style="left:78px;top:447.22px;font:normal 14.67px/18px 'Liberation Sans',sans-serif;">Né(e)<span class="s"> </span>le<span class="n"></span>:<span class="s"> </span><span class="f">{{<span class="s"> </span>date_naissance<span class="s"> </span>}}</span><span class="p">¶</span></div>
<div class="d" style="left:78px;top:467.22px;font:normal 14.67px/18px 'Liberation Sans',sans-serif;">Adresse<span class="n"></span>:<span class="s"> </span><span class="f">{{<span class="s"> </span>adresse<span class="s"> </span>}}</span><span class="p">¶</span></div>
<div class="d" style="left:78.30000000000001px;top:486.96px;font:normal 16px/19px 'Liberation Sans',sans-serif;"><span class="p">¶</span></div>
<div class="d" style="left:78.30000000000001px;top:506.92px;font:normal 14.67px/18px 'Liberation Sans',sans-serif;"><span class="p">¶</span></div>
<div class="d" style="left:78px;top:524.56px;font:normal 16px/19px 'Liberation Sans',sans-serif;">A<span class="s"> </span>EFFECTUÉ<span class="s"> </span>UN<span class="s"> </span>EXAMEN<span class="n"></span>:<span class="p">¶</span></div>
<div class="d" style="left:78px;top:562.18px;font:normal 24px/29px 'Liberation Sans',sans-serif;">Examen<span class="n"></span>:<span class="p">¶</span></div>
<div class="d" style="left:78px;top:596.72px;font:normal 14.67px/18px 'Liberation Sans',sans-serif;">Date<span class="s"> </span>de<span class="s"> </span>l’examen<span class="n"></span>:<span class="s"> </span><span class="f">{{<span class="s"> </span>date_examen<span class="s"> </span>}}</span><span class="p">¶</span></div>
<div class="d" style="left:78px;top:616.62px;font:normal 14.67px/18px 'Liberation Sans',sans-serif;">Lieu<span class="s"> </span>de<span class="s"> </span>l’examen<span class="n"></span>:<span class="s"> </span>Lycée<span class="s"> </span>Les<span class="s"> </span><span class="w"><svg class="wv" width="90" height="5"><path d="M-2.3 0.6L2.2 3.6L6.7 0.6L11.2 3.6L15.7 0.6L20.2 3.6L24.7 0.6L29.2 3.6L33.7 0.6L38.2 3.6L42.7 0.6L47.2 3.6L51.7 0.6L56.2 3.6L60.7 0.6L65.2 3.6L69.7 0.6L74.2 3.6L78.7 0.6L83.2 3.6L87.7 0.6" fill="none" stroke="#ff1a1a" stroke-width="1.200" stroke-linejoin="round"/></svg>Catalins</span><span class="p">¶</span></div>
<div class="d" style="left:78px;top:635.92px;font:normal 14.67px/18px 'Liberation Sans',sans-serif;">Matière<span class="s"> </span>de<span class="s"> </span>l’examen<span class="n"></span>:<span class="s"> </span><span class="f">{{<span class="s"> </span>matiere }}</span><span class="p">¶</span></div>
<div class="d" style="left:78.30000000000001px;top:656.62px;font:normal 14.67px/18px 'Liberation Sans',sans-serif;"><span class="p">¶</span></div>
<div class="d" style="left:78px;top:674.56px;font:normal 16px/19px 'Liberation Sans',sans-serif;">ET<span class="s"> </span>A<span class="s"> </span>OBTENU<span class="s"> </span>UNE<span class="s"> </span>NOTE<span class="s"> </span>DE<span class="n"></span>:<span class="s"> </span><span class="f">{{<span class="s"> </span>note }}</span>/20<span class="p">¶</span></div>
<div class="d" style="left:78.30000000000001px;top:696.46px;font:normal 16px/19px 'Liberation Sans',sans-serif;"><span class="p">¶</span></div>
<div style="position:absolute;left:77px;top:717px;width:643px;height:1px;background:#c6c6c6"></div>
<div style="position:absolute;left:398px;top:717px;width:1px;height:80px;background:#c6c6c6"></div>
<div class="d" style="left:81.30000000000001px;top:720.76px;font:bold 16px/19px 'Liberation Sans',sans-serif;">Signature<span class="s"> </span>de<span class="s"> </span>l’apprenant<span class="p">¶</span></div>
<div class="d" style="left:81.5px;top:738.96px;font:normal 16px/19px 'Liberation Sans',sans-serif;"><span class="p">¶</span></div>
<div class="d" style="left:81.5px;top:757.36px;font:normal 16px/19px 'Liberation Sans',sans-serif;"><span class="p">¶</span></div>
<div class="d" style="left:81.5px;top:775.76px;font:normal 16px/19px 'Liberation Sans',sans-serif;"><span class="p">¶</span></div>
<div class="d" style="left:403px;top:720.76px;font:bold 16px/19px 'Liberation Sans',sans-serif;">Signature<span class="s"> </span>de<span class="s"> </span>la<span class="s"> </span>direction<span class="s"> </span>de<span class="s"> </span>l’organisme<span class="s"> </span></div>
<div class="d" style="left:403px;top:738.96px;font:bold 16px/19px 'Liberation Sans',sans-serif;">de<span class="s"> </span>formation<span class="p">¶</span></div>
<div class="d" style="left:403.29999999999995px;top:757.36px;font:normal 16px/19px 'Liberation Sans',sans-serif;"><span class="p">¶</span></div>
</div>
<div style="position:absolute;left:1619px;top:140px;width:1px;height:810px;background:#c4c4c4"></div>
<div style="position:absolute;left:1610px;top:218px;width:6.3px;height:541.5px;background:#8c8c8c;border-radius:3.2px"></div>
<div style="position:absolute;left:1620px;top:507.7px;width:6.2px;height:73.2px;background:#a2a2a2"></div>
<svg style="position:absolute;left:1620.0px;top:540.3px;" width="6" height="8" viewBox="0 0 6 8"><path d="M.6 .5L5.400 4L.6 7.500Z" fill="#fff"/></svg>
<svg style="position:absolute;left:1625px;top:140px" width="53" height="300" viewBox="1625 140 53 300"><path d="M1645 154.500h10M1645 158.500h10M1645 162.500h10" stroke="#3a3a3a" stroke-width="1.100"/><rect x="1632" y="186.600" width="36" height="32.800" rx="5" fill="#d6d6d6"/><rect x="1641.800" y="195.200" width="16.500" height="6.800" rx="3.400" fill="#e8521a"/><rect x="1641.800" y="204" width="16.500" height="6.800" rx="3.400" fill="#e8521a"/><circle cx="1654.600" cy="198.600" r="2.200" fill="#fff"/><circle cx="1645.400" cy="207.400" r="2.200" fill="#fff"/><text transform="translate(1649.74 246.70) scale(0.1461 0.1555)" font-family="Liberation Sans,sans-serif" font-size="100" font-weight="bold" font-style="normal" fill="#2e2e2e" >A</text><path d="M1639.70 255.20L1643.70 250.70" stroke="#f8907e" stroke-width="3" stroke-linecap="butt"/><path d="M1644.60 250.60L1640.40 244.90L1643.80 241.20L1645.40 243.00" stroke="#4a4a4a" stroke-width=".9" fill="none" stroke-linejoin="round"/><path d="M1646.95 241.00L1654.00 248.30L1650.50 252.70L1643.40 245.00Z" fill="#fff" stroke="#3a3a3a" stroke-width="1" stroke-linejoin="round"/><rect x="1640.300" y="278.300" width="15.400" height="13.600" rx="2" fill="#d95fc8" stroke="#5a3a58"/><rect x="1644.600" y="282.600" width="15.400" height="13" rx="2" fill="#d95fc8" stroke="#5a3a58"/><path d="M1647.500 293l2.800-4.800l1.800 2.600l1-1.200l2.400 3.400Z" fill="#fff"/><circle cx="1656.300" cy="286.200" r="1.200" fill="#fff"/><circle cx="1650" cy="328.900" r="9.700" fill="#4a72e2" stroke="#2a3a6a" stroke-width="1.100"/><path d="M1655 323.900l-5.200 3.800l1.400 1.400Z" fill="#e83a4a"/><path d="M1645 333.900l6.800-3.600l-3.200-3.200Z" fill="#fff"/><path d="M1644 362.500h9.500l4.500 4.500v11a1.700 1.700 0 0 1-1.700 1.700H1644a1.700 1.700 0 0 1-1.700-1.700v-13.800a1.700 1.700 0 0 1 1.700-1.700Z" fill="#fff" stroke="#3a3a3a" stroke-width="1.100"/><path d="M1653.500 362.500v3a1.500 1.500 0 0 0 1.500 1.500h3" fill="none" stroke="#3a3a3a" stroke-width="1"/><text transform="translate(1649.74 414.70) scale(0.1461 0.1555)" font-family="Liberation Sans,sans-serif" font-size="100" font-weight="bold" font-style="normal" fill="#2e2e2e" >A</text><path d="M1639.70 423.20L1643.70 418.70" stroke="#f8907e" stroke-width="3" stroke-linecap="butt"/><path d="M1644.60 418.60L1640.40 412.90L1643.80 409.20L1645.40 411.00" stroke="#4a4a4a" stroke-width=".9" fill="none" stroke-linejoin="round"/><path d="M1646.95 409.00L1654.00 416.30L1650.50 420.70L1643.40 413.00Z" fill="#fff" stroke="#3a3a3a" stroke-width="1" stroke-linejoin="round"/><circle cx="1653.8" cy="416.8" r="3.400" fill="#fff" stroke="#4a4a4a" stroke-width=".95"/><path d="M1656.4 419.4l2.800 2.800" stroke="#4a4a4a" stroke-width="1.300" stroke-linecap="round"/></svg>
<div style="position:absolute;left:8.8px;top:958.9px;width:20px;height:20px;border-radius:10px;background:#e8501e"></div>
<svg style="position:absolute;left:13.8px;top:963.9px;" width="10" height="10" viewBox="0 0 10 10"><path d="M1.500 1.500L8.500 8.500M8.500 1.500L1.500 8.500" stroke="#fff" stroke-width="1.300" fill="none"/></svg>
<div style="position:absolute;left:35.3px;top:952.2px;width:247.4px;height:31.4px;border:1px solid #cdcdcd;border-radius:6px;background:#fff"></div>
<div style="position:absolute;left:249.3px;top:953.2px;width:1px;height:31.3px;background:#d6d6d6"></div>
<svg style="position:absolute;left:261.0px;top:965.8px;" width="12" height="7" viewBox="0 0 12 7"><path d="M1 1L6 5.800L11 1" stroke="#2e2e2e" stroke-width="1.300" fill="none"/></svg>
<span style="position:absolute;left:44.4px;top:961.28px;white-space:pre;font:normal 14.5px/17px 'Liberation Sans',sans-serif;color:#8c8c8c;letter-spacing:-0.085px;">Rechercher</span>
<div style="position:absolute;left:291.8px;top:958.9px;width:20px;height:20px;border-radius:10px;background:#dedede;box-shadow:inset 0 0 0 .6px #c6c6c6"></div>
<svg style="position:absolute;left:295.8px;top:965.4px;" width="12" height="7" viewBox="0 0 12 7"><path d="M1 5.800L6 1L11 5.800" stroke="#b4b4b4" stroke-width="1.200" fill="none"/></svg>
<div style="position:absolute;left:324.8px;top:958.9px;width:20px;height:20px;border-radius:10px;background:#dedede;box-shadow:inset 0 0 0 .6px #c6c6c6"></div>
<svg style="position:absolute;left:328.8px;top:965.4px;" width="12" height="7" viewBox="0 0 12 7"><path d="M1 1L6 5.800L11 1" stroke="#b4b4b4" stroke-width="1.200" fill="none"/></svg>
<span style="position:absolute;left:354.2px;top:961.30px;white-space:pre;font:normal 13px/16px 'Liberation Sans',sans-serif;color:#929292;letter-spacing:-0.082px;">Tout rechercher</span>
<div style="position:absolute;left:456.4px;top:961.1px;width:13.4px;height:13.7px;border:1px solid #c6c6c6;border-radius:3px;background:#fff"></div>
<span style="position:absolute;left:476.6px;top:961.28px;white-space:pre;font:normal 14.5px/17px 'Liberation Sans',sans-serif;color:#3d3d3d;letter-spacing:-0.067px;">Respecter la casse</span>
<div style="position:absolute;left:607.5px;top:953px;width:1px;height:32.5px;background:#dadada"></div>
<div style="position:absolute;left:648.2px;top:953px;width:1px;height:32.5px;background:#dadada"></div>
<svg style="position:absolute;left:610px;top:952px" width="36" height="34" viewBox="610 952 36 34"><circle cx="627" cy="968.6" r="7.700" fill="#fff" stroke="#3a3a3a" stroke-width="1.2"/><path d="M633 974.6L636.8 978.4" stroke="#555" stroke-width="1.8" stroke-linecap="round"/><path d="M627.8 968.2L635.3 960.7" stroke="#2a5fdc" stroke-width="3"/><path d="M625.4 970.6l1.300-3.300l2 2Z" fill="#f0b080"/></svg>
<svg style="position:absolute;left:0;top:990px" width="1678" height="38" viewBox="0 990 1678 38"><path d="M14 1000v14.300l3.600-3.300l2.500 5.400l2.200-1l-2.500-5.300l4.700-.3Z" fill="#1c1c1c"/><path d="M39.3 992.3V1024.9" stroke="#dadada" stroke-width="1" fill="none"/><rect x="51.600" y="1006.300" width="16.800" height="2.700" rx=".7" fill="#fff" stroke="#3a3a3a" stroke-width="1"/><path d="M82.200 1006.300h11.300v-2.300l6 3.800l-6 3.800v-2.300H82.200Z" fill="#fff" stroke="#3a3a3a" stroke-width="1" stroke-linejoin="round"/><path d="M110.20 1007.80H117.00L113.6 1011.60Z" fill="#111" stroke="#111" stroke-width=".5" stroke-linejoin="round"/><path d="M137.400 997.900L140.200 1000.400L131.300 1009.400L128.500 1006.750Z" fill="#2a5fdc"/><path d="M128.500 1006.750L131.300 1009.400L126 1011.700Z" fill="#f4b888"/><path d="M127 1015.600c4.500-.2 7.500-2 10-3.200c2.200-1 5-1.200 5.700.6c.6 1.700-1 3-2.300 2.400c-1-.5-.9-1.500-.4-1.800" fill="none" stroke="#3a3a3a" stroke-width="2.800" stroke-linecap="round" stroke-linejoin="round"/><path d="M127 1015.600c4.500-.2 7.500-2 10-3.200c2.200-1 5-1.200 5.700.6c.6 1.700-1 3-2.300 2.400c-1-.5-.9-1.500-.4-1.800" fill="none" stroke="#fff" stroke-width="1" stroke-linecap="round"/><path d="M154.00 1007.80H160.80L157.4 1011.60Z" fill="#111" stroke="#111" stroke-width=".5" stroke-linejoin="round"/><path d="M174 1002.050h14.500" stroke="#6a6a6a" stroke-width="1.300"/><path d="M174 1015c.3-7.500 5.500-12.500 14-12.800" stroke="#1262aa" stroke-width="1.800" fill="none"/><rect x="172.300" y="1000.400" width="3.300" height="3.300" rx=".5" fill="#fff" stroke="#3a3a3a" stroke-width="1"/><rect x="187.400" y="1000.400" width="3.300" height="3.300" rx=".5" fill="#b8ecff" stroke="#3a3a3a" stroke-width="1"/><rect x="172.300" y="1014.500" width="3.300" height="3.300" rx=".5" fill="#b8ecff" stroke="#3a3a3a" stroke-width="1"/><path d="M213.800 1015.600L205.400 1003.900L220.200 999.700L216.800 1007.100L222.200 1015.600" fill="none" stroke="#3a3a3a" stroke-width="2.700" stroke-linejoin="round" stroke-linecap="round"/><path d="M213.800 1015.600L205.400 1003.900L220.200 999.700L216.800 1007.100L222.200 1015.600" fill="none" stroke="#fff" stroke-width=".9" stroke-linejoin="round" stroke-linecap="round"/><path d="M234.5 992.3V1024.9" stroke="#dadada" stroke-width="1" fill="none"/><rect x="246.500" y="1001.800" width="17" height="12.500" rx=".6" fill="#fff" stroke="#3a3a3a" stroke-width="1.100"/><rect x="279.500" y="1001.800" width="17" height="12.500" rx="3" fill="#fff" stroke="#3a3a3a" stroke-width="1.100"/><rect x="312.600" y="999.600" width="16.600" height="16.600" rx=".6" fill="#fff" stroke="#3a3a3a" stroke-width="1.100"/><ellipse cx="354" cy="1008" rx="8.500" ry="6.200" fill="#fff" stroke="#3a3a3a" stroke-width="1.100"/><circle cx="386.800" cy="1007.900" r="8.400" fill="#fff" stroke="#3a3a3a" stroke-width="1.100"/><path d="M419.700 999.800l8.300 16.300h-16.600Z" fill="#fff" stroke="#3a3a3a" stroke-width="1.100" stroke-linejoin="round"/><path d="M444.500 999.800l16.600 16.300h-16.600Z" fill="#fff" stroke="#3a3a3a" stroke-width="1.100" stroke-linejoin="round"/><path d="M473.6 992.3V1024.9" stroke="#dadada" stroke-width="1" fill="none"/><path d="M492 999.600l8.500 8.400l-8.500 8.400l-8.500-8.400Z" fill="#fff" stroke="#3a3a3a" stroke-width="1.100" stroke-linejoin="round"/><path d="M511.00 1007.80H517.80L514.4 1011.60Z" fill="#111" stroke="#111" stroke-width=".5" stroke-linejoin="round"/><circle cx="535.700" cy="1008" r="8.400" fill="#fff" stroke="#3a3a3a" stroke-width="1.100"/><circle cx="532.600" cy="1004.900" r="1" fill="#3a3a3a"/><circle cx="538.800" cy="1004.900" r="1" fill="#3a3a3a"/><path d="M531.400 1010.600h8.600c-.6 2-2.300 3-4.300 3s-3.700-1-4.300-3Z" fill="#fff" stroke="#3a3a3a" stroke-width="1" stroke-linejoin="round"/><path d="M555.00 1007.80H561.80L558.4 1011.60Z" fill="#111" stroke="#111" stroke-width=".5" stroke-linejoin="round"/><path d="M571.600 1008l5.200-4.700v2.700h6.200v-2.700l5.200 4.700l-5.200 4.700v-2.700h-6.200v2.700Z" fill="#fff" stroke="#3a3a3a" stroke-width="1.100" stroke-linejoin="round"/><path d="M599.00 1007.80H605.80L602.4 1011.60Z" fill="#111" stroke="#111" stroke-width=".5" stroke-linejoin="round"/><path d="M623.8 999.7L626.1 1005.7L632.5 1006.1L627.5 1010.1L629.2 1016.3L623.8 1012.8L618.4 1016.3L620.1 1010.1L615.1 1006.1L621.5 1005.7Z" fill="#fff" stroke="#3a3a3a" stroke-width="1.100" stroke-linejoin="round"/><path d="M643.00 1007.80H649.80L646.4 1011.60Z" fill="#111" stroke="#111" stroke-width=".5" stroke-linejoin="round"/><path d="M661.500 999.900h12.700a2 2 0 0 1 2 2v8a2 2 0 0 1-2 2h-6l-3.600 4.300l-.6-4.300h-2.500a2 2 0 0 1-2-2v-8a2 2 0 0 1 2-2Z" fill="#fff" stroke="#3a3a3a" stroke-width="1.100" stroke-linejoin="round"/><path d="M686.90 1007.80H693.70L690.3 1011.60Z" fill="#111" stroke="#111" stroke-width=".5" stroke-linejoin="round"/><rect x="703.600" y="999.600" width="16.600" height="16.600" rx=".8" fill="#fff" stroke="#3a3a3a" stroke-width="1.100"/><path d="M709 999.600v16.600M709 1005.400h11.200" stroke="#3a3a3a" stroke-width="1.100"/><path d="M731.20 1007.80H738.00L734.6 1011.60Z" fill="#111" stroke="#111" stroke-width=".5" stroke-linejoin="round"/><path d="M745.4 992.3V1024.9" stroke="#dadada" stroke-width="1" fill="none"/><rect x="763.300" y="999.500" width="10" height="12.500" rx="1.500" fill="#fff" stroke="#3a3a3a" stroke-width="1"/><path d="M765.300 1002.500h6M765.300 1004.500h6M765.300 1006.500h3.500" stroke="#8e8ef8" stroke-width="1"/><path d="M758.300 1015.400l2.300-10h2.700" fill="none" stroke="#4a4a4a" stroke-width="1.600"/><path d="M786.4 992.3V1024.9" stroke="#dadada" stroke-width="1" fill="none"/><rect x="797.600" y="999.600" width="18.400" height="16.600" rx="2" fill="#f8907e" stroke="#6a4038"/><path d="M801.800 1004h10v2.400h-3.800v7h-2.400v-7h-3.800Z" fill="#fff"/><text transform="translate(832.40 1012.30) scale(0.2012 0.1875)" font-family="Liberation Sans,sans-serif" font-size="100" font-weight="bold" font-style="normal" fill="#2e2e2e" >A</text><path d="M828.500 1019c3.500-2.800 7-4.300 11.500-4.300s8 1.500 11.500 4.300" fill="none" stroke="#e8501e" stroke-width="1.400"/><path d="M860 992.3V1024.9" stroke="#dadada" stroke-width="1" fill="none"/><path d="M869 1000.900h19" stroke="#b8b8b8" stroke-width="1.200"/><rect x="873.500" y="998.600" width="4" height="4" fill="#d0d0d0" stroke="#b0b0b0" stroke-width=".8"/><path d="M877 1003v12.500l3-3.500l7.500 1.500Z" fill="#b4b4b4"/><path d="M906 1003.500l3-3.500h13.500v12.500l-3 3.400H906Z" fill="#c8c8c8" stroke="#b4b4b4" stroke-width=".8"/><path d="M906 1003.500h13.500v12.400M919.500 1003.500l3-3.500" fill="none" stroke="#b4b4b4" stroke-width=".8"/><path d="M912.700 1006l3.800 4h-2.200v4h-3.200v-4h-2.200Z" fill="#e4e4e4" stroke="#b0b0b0" stroke-width=".6"/></svg>
<div style="position:absolute;left:0px;top:1028px;width:1678px;height:1px;background:#cacaca"></div>
<div style="position:absolute;left:27.5px;top:1032.5px;width:1px;height:14.5px;background:#d4d4d4"></div>
<div style="position:absolute;left:246.5px;top:1032.5px;width:1px;height:14.5px;background:#d4d4d4"></div>
<div style="position:absolute;left:550px;top:1032.5px;width:1px;height:14.5px;background:#d4d4d4"></div>
<div style="position:absolute;left:851px;top:1032.5px;width:1px;height:14.5px;background:#d4d4d4"></div>
<div style="position:absolute;left:1107.5px;top:1032.5px;width:1px;height:14.5px;background:#d4d4d4"></div>
<div style="position:absolute;left:1176px;top:1032.5px;width:1px;height:14.5px;background:#d4d4d4"></div>
<div style="position:absolute;left:1204px;top:1032.5px;width:1px;height:14.5px;background:#d4d4d4"></div>
<div style="position:absolute;left:1233.5px;top:1032.5px;width:1px;height:14.5px;background:#d4d4d4"></div>
<div style="position:absolute;left:1408.5px;top:1032.5px;width:1px;height:14.5px;background:#d4d4d4"></div>
<div style="position:absolute;left:1483.5px;top:1032.5px;width:1px;height:14.5px;background:#d4d4d4"></div>
<div style="position:absolute;left:1627px;top:1032.5px;width:1px;height:14.5px;background:#d4d4d4"></div>
<span style="position:absolute;left:37px;top:1031.76px;white-space:pre;font:normal 12.8px/15px 'Liberation Sans',sans-serif;color:#3d3d3d;letter-spacing:-0.548px;">Page 1 de 1</span>
<span style="position:absolute;left:256px;top:1031.76px;white-space:pre;font:normal 12.8px/15px 'Liberation Sans',sans-serif;color:#3d3d3d;letter-spacing:-0.246px;">130 mots, 621 caractères</span>
<span style="position:absolute;left:559.5px;top:1031.76px;white-space:pre;font:normal 12.8px/15px 'Liberation Sans',sans-serif;color:#3d3d3d;letter-spacing:-0.206px;">Style de page par défaut</span>
<span style="position:absolute;left:935px;top:1031.76px;white-space:pre;font:normal 12.8px/15px 'Liberation Sans',sans-serif;color:#3d3d3d;letter-spacing:-0.528px;">Français (France)</span>
<span style="position:absolute;left:1634.6px;top:1031.76px;white-space:pre;font:normal 12.8px/15px 'Liberation Sans',sans-serif;color:#3d3d3d;letter-spacing:-0.659px;">100 %</span>
<svg style="position:absolute;left:0;top:1030px" width="1678" height="19" viewBox="0 1030 1678 19"><path d="M13.600 1034.300h3.200v3.200h2.200l-3.800 4.300l-3.800-4.300h2.200Z" fill="#8cc63f" stroke="#4a5a2a" stroke-width=".8" stroke-linejoin="round"/><path d="M11.200 1043.300h8" stroke="#3a3a3a" stroke-width="1"/><rect x="1182.500" y="1036.800" width="8.500" height="5.400" fill="#fff" stroke="#e8521a" stroke-width="1.100"/><path d="M1196.600 1035.800v7.400M1194.800 1035.800h3.600M1194.800 1043.200h3.600" stroke="#2e2e2e" stroke-width="1"/><path d="M1422.0 1035.500h4l2.500 2.500v5a1.500 1.500 0 0 1-1.500 1.500h-5a1.500 1.500 0 0 1-1.500-1.500v-6a1.500 1.500 0 0 1 1.500-1.500Z" fill="#fff" stroke="#3a3a3a" stroke-width="1"/><path d="M1436.0 1035.500h4l2.500 2.500v5a1.500 1.500 0 0 1-1.500 1.500h-5a1.500 1.500 0 0 1-1.500-1.500v-6a1.500 1.500 0 0 1 1.500-1.500Z" fill="#fff" stroke="#b8b8b8" stroke-width="1"/><path d="M1445.0 1035.500h4l2.500 2.500v5a1.500 1.500 0 0 1-1.500 1.500h-5a1.500 1.500 0 0 1-1.500-1.500v-6a1.500 1.500 0 0 1 1.500-1.500Z" fill="#fff" stroke="#b8b8b8" stroke-width="1"/><path d="M1465.800 1037c-1.500-1.500-4-1.700-6-1.500a1.500 1.500 0 0 0-1.500 1.500v6a1.500 1.500 0 0 0 1.500 1.500h6ZM1465.800 1037c1.500-1.500 4-1.700 6-1.500a1.500 1.500 0 0 1 1.500 1.500v6a1.500 1.500 0 0 1-1.500 1.500h-6Z" fill="#fff" stroke="#b8b8b8" stroke-width="1"/><path d="M1494 1039.300h7.800" stroke="#2e2e2e" stroke-width="1.500"/><path d="M1508 1039.300h96.700" stroke="#5a5a5a" stroke-width="1"/><path d="M1536 1037.300v4" stroke="#5a5a5a" stroke-width="1"/><circle cx="1556" cy="1039.400" r="3.800" fill="#fff" stroke="#2e2e2e" stroke-width="1.100"/><path d="M1611 1039.300h8M1615 1035.300v8" stroke="#2e2e2e" stroke-width="1.500"/></svg>
</body></html>
